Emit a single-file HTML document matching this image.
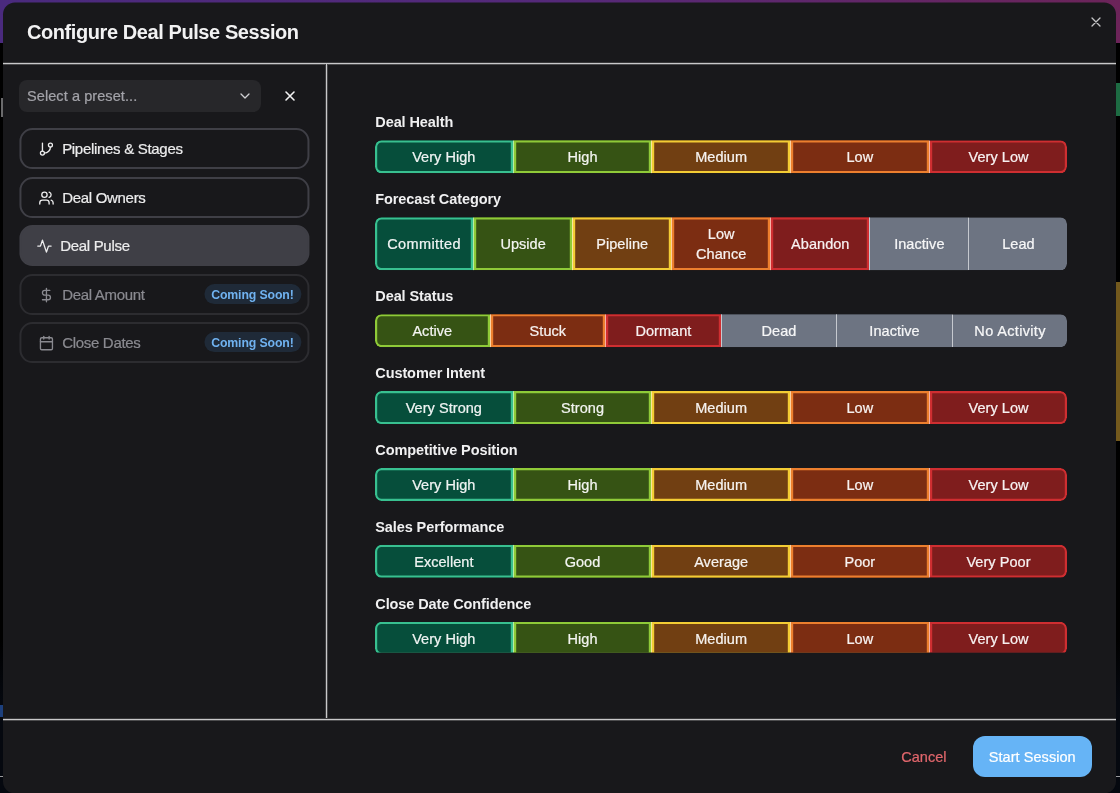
<!DOCTYPE html>
<html lang="en">
<head>
<meta charset="utf-8">
<title>Configure Deal Pulse Session</title>
<style>
*{box-sizing:border-box;margin:0;padding:0}
html,body{width:1120px;height:793px;overflow:hidden;background:#000}
body{font-family:"Liberation Sans",Arial,sans-serif;color:#ececed;position:relative;-webkit-text-stroke:0.22px currentColor}
h1,.lbl,.chip{-webkit-text-stroke:0}
#page{position:absolute;left:0;top:0;width:1120px;height:793px;overflow:hidden;will-change:transform}
.abs{position:absolute}
#bg{position:absolute;left:0;top:0;width:1120px;height:793px;background:#000;overflow:hidden}
#bg div{position:absolute}
#modal{position:absolute;left:3px;top:2px;width:1113px;height:791px;transform:translateY(0.4px);background:#18181b;border-radius:12px}
.hline{position:absolute;left:3px;width:1113px;height:3px;background:linear-gradient(180deg,#38383a 0,#38383a 1px,#c8c8ca 1px,#c8c8ca 2px,#4c4c4e 2px,#4c4c4e 3px)}
.vline{position:absolute;width:3px;background:linear-gradient(90deg,#3c3c3e 0,#3c3c3e 1px,#c8c8ca 1px,#c8c8ca 2px,#444446 2px,#444446 3px)}
h1{position:absolute;left:27px;top:18.6px;font-size:20px;line-height:26px;font-weight:700;color:#f2f2f3;white-space:nowrap;letter-spacing:-0.42px}
.select{position:absolute;left:19px;top:80px;width:242px;height:32px;border-radius:8px;background:#27272a;color:#a3a3a9;letter-spacing:0.08px;font-size:14.5px;line-height:32.2px;padding-left:8px;white-space:nowrap}
.nav{position:absolute;left:19px;width:290px;height:41px;transform:translate(0.45px,0.1px);border:2px solid #3f3f46;border-radius:13px;font-size:15px;color:#ececed;display:flex;align-items:center;padding-left:16.5px;letter-spacing:-0.3px;white-space:nowrap}
.nav svg{width:16px;height:16px;margin-right:8.2px;flex:none}
.nav.active{background:#3f3f46;border-color:#3f3f46;padding-left:14.5px}
.nav.dis{color:#8a8a90;border-color:#2c2c30}
.chip{position:absolute;right:6.5px;top:8.3px;height:20px;width:97px;text-align:center;border-radius:10px;background:#1f2a38;color:#70b2f0;font-size:12.3px;font-weight:700;line-height:20px;padding-top:1px;letter-spacing:-0.12px}
.lbl{position:absolute;left:375px;transform:translate(0.3px,0);font-size:14.5px;font-weight:700;color:#f0f0f1;line-height:20px;white-space:nowrap;letter-spacing:-0.1px}
.grp{position:absolute;left:375px;width:692.4px;height:33px;display:flex;border-radius:6.5px;overflow:hidden;transform:translate(0,0.4px)}
.grp>div:first-child{border-radius:6.5px 0 0 6.5px;border-left:0}
.grp>div:last-child{border-radius:0 6.5px 6.5px 0}
.grp>div{flex:1 1 0;min-width:0;width:0;border-left:1px solid #ccc;display:flex;align-items:center;justify-content:center;text-align:center;font-size:14.5px;line-height:20px;color:rgba(255,255,255,.93);white-space:nowrap;letter-spacing:0.05px}
.c1{border-left-color:#a6ecd0 !important;background:#064e3b;box-shadow:inset 0 0 0 2.2px #38c090}
.c2{border-left-color:#b6eea4 !important;background:#365314;box-shadow:inset 0 0 0 2.2px #8fca38}
.c3{border-left-color:#f6e89a !important;background:#713f12;box-shadow:inset 0 0 0 2.2px #f3cc34}
.c4{border-left-color:#fcd2a0 !important;background:#7c2d12;box-shadow:inset 0 0 0 2.2px #ec7f2e}
.c5{border-left-color:#f8b0a4 !important;background:#7f1d1d;box-shadow:inset 0 0 0 2.2px #cf2e31}
.c0{border-left-color:#c6c9cf !important;background:#6d7482}
.cancel{position:absolute;left:901.3px;top:747px;font-size:14.5px;line-height:20px;color:#e0666c;white-space:nowrap}
.start{position:absolute;left:973px;top:736px;width:118.5px;height:40.5px;border-radius:12px;background:#66b4f6;color:#fff;font-size:14.5px;line-height:42.4px;text-align:center;white-space:nowrap;letter-spacing:0.05px}
</style>
</head>
<body>
<div id="page">
<div id="bg">
<div style="left:0;top:0;width:1120px;height:43px;background:linear-gradient(90deg,#4a2a7e 0%,#55297a 50%,#6c2459 100%)"></div>
<div style="left:1px;top:98px;width:2px;height:19px;background:#6a6a6c"></div>
<div style="left:1112px;top:83px;width:8px;height:33px;background:#1d6b43"></div>
<div style="left:1112px;top:282px;width:8px;height:159px;background:#73591d"></div>
<div style="left:0;top:640px;width:1120px;height:153px;background:linear-gradient(180deg,#000 0%,#05080f 40%,#05080f 100%)"></div>
<div style="left:0;top:776px;width:1120px;height:1px;background:#9a9a9c"></div>
<div style="left:0;top:705px;width:3px;height:12px;background:#1c3f7c"></div>
</div>
<div id="modal" role="dialog" aria-label="Configure Deal Pulse Session"></div>
<h1>Configure Deal Pulse Session</h1>
<svg class="abs" style="left:1088.6px;top:15.2px;width:14px;height:14px" viewBox="0 0 14 14"><path d="M3 3 L11 11 M11 3 L3 11" stroke="#c4c4c6" stroke-width="1.3" stroke-linecap="round" fill="none"/></svg>
<div class="hline" style="top:62px"></div>
<div class="select" role="combobox">Select a preset...<svg class="abs" style="left:219.7px;top:10.4px;width:12px;height:12px" viewBox="0 0 12 12"><path d="M2 4 L6 8 L10 4" stroke="#d0d0d3" stroke-width="1.3" stroke-linecap="round" stroke-linejoin="round" fill="none"/></svg></div>
<svg class="abs" style="left:283.5px;top:90.3px;width:12px;height:12px" viewBox="0 0 12 12"><path d="M2 2 L10 10 M10 2 L2 10" stroke="#f2f2f3" stroke-width="1.6" stroke-linecap="round" fill="none"/></svg>
<div class="nav" role="tab" style="top:128px"><svg viewBox="0 0 24 24" fill="none" stroke="currentColor" stroke-width="2" stroke-linecap="round" stroke-linejoin="round"><line x1="6" y1="3" x2="6" y2="15"/><circle cx="18" cy="6" r="3"/><circle cx="6" cy="18" r="3"/><path d="M18 9a9 9 0 0 1-9 9"/></svg>Pipelines &amp; Stages</div>
<div class="nav" role="tab" style="top:177px"><svg viewBox="0 0 24 24" fill="none" stroke="currentColor" stroke-width="2" stroke-linecap="round" stroke-linejoin="round"><path d="M16 21v-2a4 4 0 0 0-4-4H6a4 4 0 0 0-4 4v2"/><circle cx="9" cy="7" r="4"/><path d="M22 21v-2a4 4 0 0 0-3-3.87"/><path d="M16 3.13a4 4 0 0 1 0 7.75"/></svg>Deal Owners</div>
<div class="nav active" role="tab" style="top:225px"><svg viewBox="0 0 24 24" fill="none" stroke="currentColor" stroke-width="2" stroke-linecap="round" stroke-linejoin="round"><path d="M22 12h-4l-3 9L9 3l-3 9H2"/></svg>Deal Pulse</div>
<div class="nav dis" role="tab" style="top:274px"><svg viewBox="0 0 24 24" fill="none" stroke="currentColor" stroke-width="2" stroke-linecap="round" stroke-linejoin="round"><line x1="12" y1="2" x2="12" y2="22"/><path d="M17 5H9.5a3.5 3.5 0 0 0 0 7h5a3.5 3.5 0 0 1 0 7H6"/></svg>Deal Amount<span class="chip">Coming Soon!</span></div>
<div class="nav dis" role="tab" style="top:322px"><svg viewBox="0 0 24 24" fill="none" stroke="currentColor" stroke-width="2" stroke-linecap="round" stroke-linejoin="round"><rect x="3" y="4" width="18" height="18" rx="2"/><line x1="16" y1="2" x2="16" y2="6"/><line x1="8" y1="2" x2="8" y2="6"/><line x1="3" y1="10" x2="21" y2="10"/></svg>Close Dates<span class="chip">Coming Soon!</span></div>
<div class="vline" style="left:325px;top:64px;height:655px"></div>
<div class="lbl" style="top:112px">Deal Health</div>
<div class="grp" role="group" aria-label="Deal Health" style="top:140px;height:33px;transform:translate(0,0.3px)"><div class="c1" role="button">Very High</div><div class="c2" role="button">High</div><div class="c3" role="button">Medium</div><div class="c4" role="button">Low</div><div class="c5" role="button">Very Low</div></div>
<div class="lbl" style="top:189px">Forecast Category</div>
<div class="grp" role="group" aria-label="Forecast Category" style="top:217px;height:53px;transform:translate(0,0.3px)"><div class="c1" role="button"><span style="letter-spacing:0.4px">Committed</span></div><div class="c2" role="button">Upside</div><div class="c3" role="button">Pipeline</div><div class="c4" role="button">Low<br>Chance</div><div class="c5" role="button">Abandon</div><div class="c0" role="button">Inactive</div><div class="c0" role="button">Lead</div></div>
<div class="lbl" style="top:286px">Deal Status</div>
<div class="grp" role="group" aria-label="Deal Status" style="top:314px;height:33px;transform:translate(0,0.15px)"><div class="c2" role="button">Active</div><div class="c4" role="button">Stuck</div><div class="c5" role="button">Dormant</div><div class="c0" role="button">Dead</div><div class="c0" role="button">Inactive</div><div class="c0" role="button"><span style="letter-spacing:0.35px">No Activity</span></div></div>
<div class="lbl" style="top:363px">Customer Intent</div>
<div class="grp" role="group" aria-label="Customer Intent" style="top:391px;height:33px;transform:translate(0,0.1px)"><div class="c1" role="button">Very Strong</div><div class="c2" role="button">Strong</div><div class="c3" role="button">Medium</div><div class="c4" role="button">Low</div><div class="c5" role="button">Very Low</div></div>
<div class="lbl" style="top:440px">Competitive Position</div>
<div class="grp" role="group" aria-label="Competitive Position" style="top:468px;height:33px;transform:translate(0,0px)"><div class="c1" role="button">Very High</div><div class="c2" role="button">High</div><div class="c3" role="button">Medium</div><div class="c4" role="button">Low</div><div class="c5" role="button">Very Low</div></div>
<div class="lbl" style="top:517px">Sales Performance</div>
<div class="grp" role="group" aria-label="Sales Performance" style="top:545px;height:33px;transform:translate(0,-0.2px)"><div class="c1" role="button">Excellent</div><div class="c2" role="button">Good</div><div class="c3" role="button">Average</div><div class="c4" role="button">Poor</div><div class="c5" role="button">Very Poor</div></div>
<div class="lbl" style="top:594px">Close Date Confidence</div>
<div class="grp" role="group" aria-label="Close Date Confidence" style="top:622px;height:33px;transform:translate(0,-0.2px);clip-path:inset(0 0 2.2px 0)"><div class="c1" role="button">Very High</div><div class="c2" role="button">High</div><div class="c3" role="button">Medium</div><div class="c4" role="button">Low</div><div class="c5" role="button">Very Low</div></div>
<div class="hline" style="top:718px"></div>
<div class="cancel" role="button">Cancel</div>
<div class="start" role="button">Start Session</div>
</div>
</body>
</html>
